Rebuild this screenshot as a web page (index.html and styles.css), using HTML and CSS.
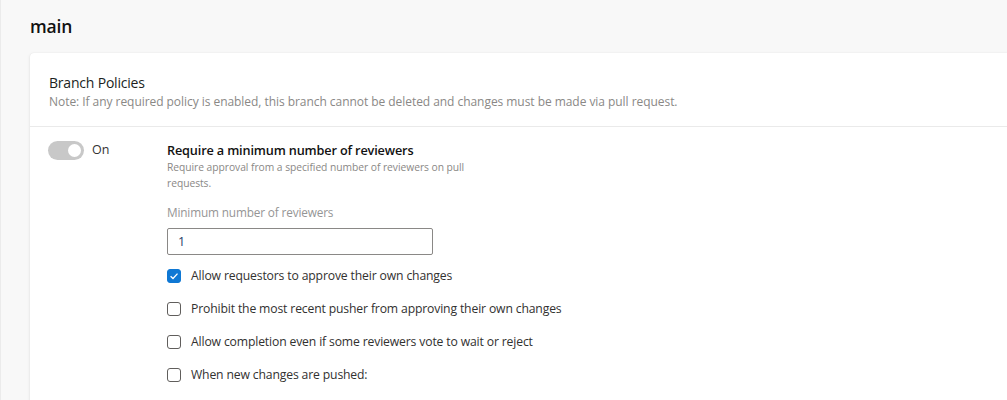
FILE: index.html
```html
<!DOCTYPE html>
<html>
<head>
<meta charset="utf-8">
<link rel="stylesheet" href="styles.css">
</head>
<body>
<div class="page">
  <h1 class="branch">main</h1>
  <div class="card">
    <div class="card-header">
      <div class="card-title">Branch Policies</div>
      <div class="card-note">Note: If any required policy is enabled, this branch cannot be deleted and changes must be made via pull request.</div>
    </div>
    <div class="policy">
      <div class="toggle-col">
        <span class="toggle"><span class="knob"></span></span>
        <span class="toggle-label">On</span>
      </div>
      <div class="policy-body">
        <div class="policy-title">Require a minimum number of reviewers</div>
        <div class="policy-desc">Require approval from a specified number of reviewers on pull requests.</div>
        <div class="field-label">Minimum number of reviewers</div>
        <div class="text-input">1</div>
        <div class="checks">
          <div class="check-row">
            <span class="box checked"><svg width="10" height="10" viewBox="0 0 10 10"><path d="M1.6 5.2 L4 7.5 L8.5 2.6" fill="none" stroke="#fff" stroke-width="1.3"/></svg></span>
            <span class="check-label">Allow requestors to approve their own changes</span>
          </div>
          <div class="check-row">
            <span class="box"></span>
            <span class="check-label">Prohibit the most recent pusher from approving their own changes</span>
          </div>
          <div class="check-row">
            <span class="box"></span>
            <span class="check-label">Allow completion even if some reviewers vote to wait or reject</span>
          </div>
          <div class="check-row">
            <span class="box"></span>
            <span class="check-label">When new changes are pushed:</span>
          </div>
        </div>
      </div>
    </div>
  </div>
</div>
</body>
</html>
```

FILE: styles.css
```css
html, body {
  margin: 0;
  padding: 0;
}
body {
  background: #f8f8f8;
  font-family: "Open Sans", "Noto Sans", sans-serif;
  color: #201f1e;
  overflow: hidden;
}
.page {
  height: 400px;
  border-left: 1px solid #ebebeb;
  padding-left: 29px;
}
.branch {
  margin: 0;
  padding-top: 13px;
  height: 40px;
  box-sizing: border-box;
  font-size: 17.5px;
  line-height: 27px;
  font-weight: 600;
  color: #111;
  letter-spacing: -0.2px;
}
.card {
  margin-top: 13px;
  background: #fff;
  border-radius: 4px 0 0 0;
  box-shadow: 0 1.6px 3.6px rgba(0,0,0,0.10), 0 0.3px 0.9px rgba(0,0,0,0.10);
  height: 360px;
}
.card-header {
  padding: 20px 19px 16px;
  border-bottom: 1px solid #eaeaea;
}
.card-title {
  font-size: 14px;
  line-height: 20px;
  color: #201f1e;
  letter-spacing: -0.2px;
}
.card-note {
  margin-top: 1px;
  font-size: 12px;
  line-height: 16px;
  color: #8a8886;
  letter-spacing: -0.05px;
}
.policy {
  display: flex;
  padding: 13px 0 0 18px;
}
.toggle-col {
  width: 119px;
  flex: none;
  display: flex;
  align-items: flex-start;
  gap: 8px;
}
.toggle {
  width: 36px;
  height: 19px;
  border-radius: 10px;
  background: #c8c8c8;
  margin-top: 1px;
  display: flex;
  align-items: center;
  justify-content: flex-end;
  padding: 0 3px;
  box-sizing: border-box;
}
.knob {
  width: 13px;
  height: 13px;
  border-radius: 50%;
  background: #fff;
}
.toggle-label {
  font-size: 12.5px;
  line-height: 20px;
  color: #333;
}
.policy-body {
  flex: 1;
}
.policy-title {
  font-size: 12.7px;
  line-height: 17px;
  font-weight: 600;
  color: #111;
  margin-top: 2px;
  letter-spacing: -0.15px;
}
.policy-desc {
  font-size: 10.3px;
  line-height: 16px;
  color: #8a8886;
  max-width: 305px;
  letter-spacing: -0.05px;
}
.field-label {
  margin-top: 11px;
  font-size: 11.8px;
  line-height: 20px;
  color: #959595;
  letter-spacing: -0.15px;
}
.text-input {
  margin-top: 6px;
  width: 266px;
  height: 27px;
  box-sizing: border-box;
  border: 1px solid #8a8886;
  border-radius: 2px;
  padding-left: 10px;
  font-size: 12.5px;
  line-height: 25px;
  color: #1e3a66;
}
.checks {
  margin-top: 4px;
}
.check-row {
  height: 33px;
  display: flex;
  align-items: center;
  gap: 10px;
}
.box {
  width: 14px;
  height: 14px;
  box-sizing: border-box;
  border: 1px solid #605e5c;
  border-radius: 3px;
  display: flex;
  align-items: center;
  justify-content: center;
  flex: none;
}
.box.checked {
  background: #0f78d4;
  border-color: #0f78d4;
}
.check-label {
  font-size: 12.2px;
  line-height: 20px;
  color: #323130;
  letter-spacing: -0.15px;
}
```
